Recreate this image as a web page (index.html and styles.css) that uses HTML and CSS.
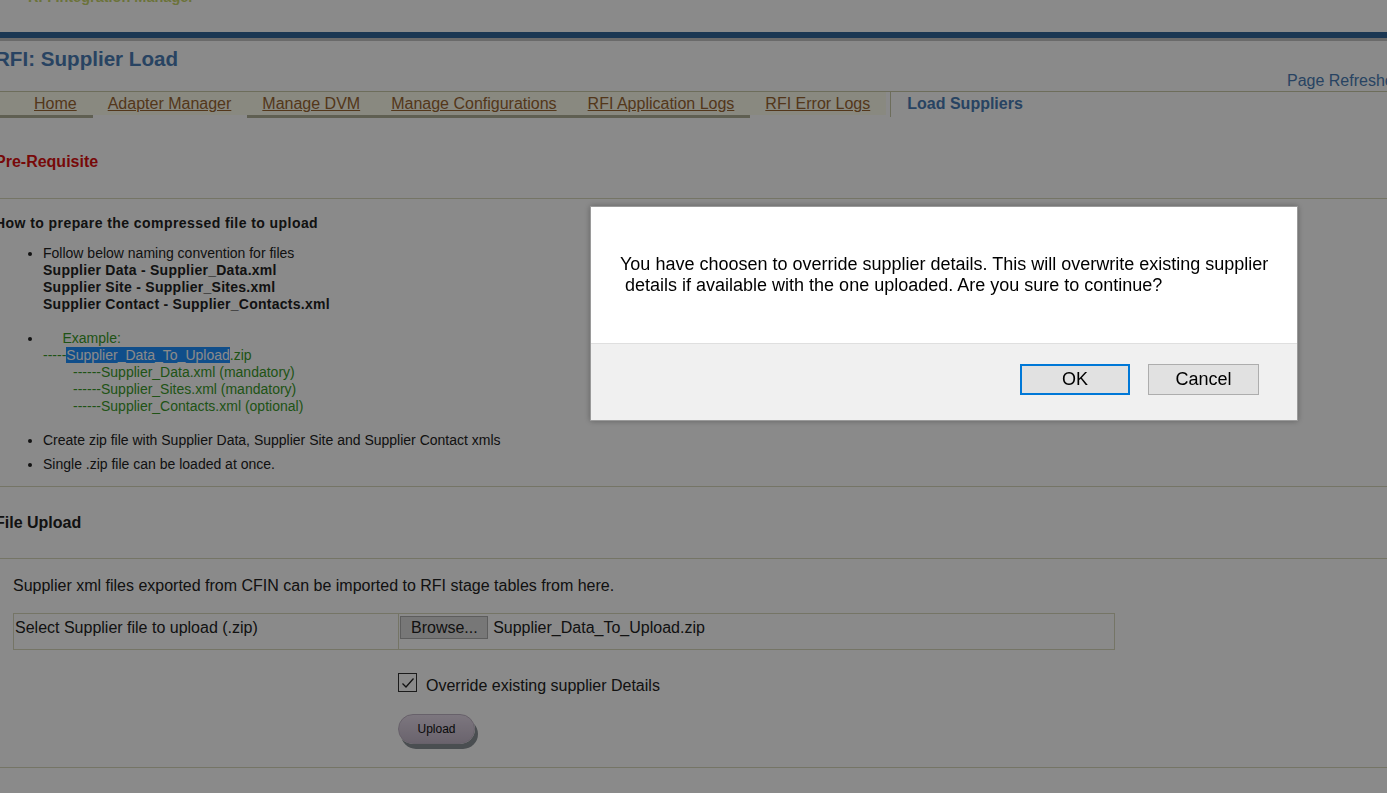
FILE: index.html
```html
<!DOCTYPE html>
<html lang="en">
<head>
    <meta charset="UTF-8">
    <meta name="viewport" content="width=device-width, initial-scale=1.0">
    <title>RFI: Supplier Load</title>
    <link rel="stylesheet" href="styles.css">
</head>
<body>
    <div class="page">
        <div class="brand"><span>RFI Integration Manager</span></div>
        <div class="brand-bar"></div>

        <h1 class="title">RFI: Supplier Load</h1>
        <div class="refresh"><span>Page Refreshed:</span></div>

        <div class="tabs">
            <a class="tab first edged" href="#">Home</a>
            <a class="tab" href="#">Adapter Manager</a>
            <a class="tab edged" href="#">Manage DVM</a>
            <a class="tab edged" href="#">Manage Configurations</a>
            <a class="tab edged" href="#">RFI Application Logs</a>
            <a class="tab" href="#">RFI Error Logs</a>
            <span class="tab active">Load Suppliers</span>
        </div>

        <div class="section-head">
            <h2 class="red">Pre-Requisite</h2>
        </div>

        <div class="prereq">
            <h3>How to prepare the compressed file to upload</h3>
            <ul>
                <li>Follow below naming convention for files<br>
                    <b>Supplier Data - Supplier_Data.xml</b><br>
                    <b>Supplier Site - Supplier_Sites.xml</b><br>
                    <b>Supplier Contact - Supplier_Contacts.xml</b><br>
                    <br>
                </li>
                <li class="green">&nbsp;&nbsp;&nbsp;&nbsp;&nbsp;Example:<br>
                    -----<span class="selected">Supplier_Data_To_Upload</span>.zip<br>
                    <span class="indent">------Supplier_Data.xml (mandatory)</span><br>
                    <span class="indent">------Supplier_Sites.xml (mandatory)</span><br>
                    <span class="indent">------Supplier_Contacts.xml (optional)</span><br>
                    <br>
                </li>
                <li>Create zip file with Supplier Data, Supplier Site and Supplier Contact xmls</li>
                <li class="gap">Single .zip file can be loaded at once.</li>
            </ul>
        </div>

        <div class="section-head upload-head">
            <h2>File Upload</h2>
        </div>

        <div class="upload">
            <p>Supplier xml files exported from CFIN can be imported to RFI stage tables from here.</p>
            <table class="file-table">
                <tr>
                    <td class="label-cell">Select Supplier file to upload (.zip)</td>
                    <td class="file-cell">
                        <span class="browse">Browse...</span>
                        <span class="file-name">Supplier_Data_To_Upload.zip</span>
                    </td>
                </tr>
            </table>
            <div class="check-row">
                <span class="check">
                    <svg width="14" height="12" viewBox="0 0 14 12"><path d="M1.5 6.5 L5 10 L12.5 1.5" fill="none" stroke="#222" stroke-width="1.3"/></svg>
                </span>
                <span>Override existing supplier Details</span>
            </div>
            <button class="upload-btn">Upload</button>
        </div>
    </div>

    <div class="overlay"></div>

    <div class="dialog">
        <div class="dialog-body">
            You have choosen to override supplier details. This will overwrite existing supplier<br>
            &nbsp;details if available with the one uploaded. Are you sure to continue?
        </div>
        <div class="dialog-foot">
            <button class="dlg-btn ok">OK</button>
            <button class="dlg-btn">Cancel</button>
        </div>
    </div>
</body>
</html>
```

FILE: styles.css
```css
body {
    margin: 0;
    font-family: "Liberation Sans", Arial, sans-serif;
    background: #ffffff;
    color: #222222;
    overflow: hidden;
}
.page {
    margin-left: -5px;
    width: 1500px;
}
.brand {
    display: flow-root;
    height: 32px;
}
.brand span {
    display: block;
    margin-top: -11px;
    padding-left: 33px;
    font-size: 14.5px;
    font-weight: bold;
    line-height: 17px;
    color: #c8d56c;
}
.brand-bar {
    height: 6px;
    background-color: #336699;
    border-bottom: 3px solid #c4c4c4;
}
.title {
    margin: 6px 0 0 0;
    font-size: 20.6px;
    line-height: 24px;
    color: #4a7db5;
}
.refresh {
    height: 20px;
    line-height: 20px;
    font-size: 16px;
    color: #4a7db5;
    white-space: nowrap;
}
.refresh span {
    margin-left: 1292px;
}
.tabs {
    display: flex;
    border-top: 1px solid #c9c9a9;
    height: 26px;
}
.tab {
    display: block;
    height: 20px;
    padding: 3px 16px 0 15px;
    line-height: 18px;
    font-size: 16px;
    color: #996633;
    background-color: #fefeed;
    border-bottom: 3px solid transparent;
    background-clip: padding-box;
}
.tab.first {
    padding-left: 39px;
}
.tab.edged {
    border-bottom-color: #b0b098;
}
.tab.active {
    margin-left: 4px;
    padding-left: 16px;
    font-weight: bold;
    color: #4a7db5;
    background: #ffffff;
    border-left: 1px solid #c9c9a9;
    border-bottom: none;
    height: 22px;
}
.section-head {
    padding: 35px 0 27px 0;
    border-bottom: 1px solid #d8d8bd;
}
.section-head h2 {
    margin: 0;
    font-size: 16px;
    line-height: 18px;
    color: #222222;
}
.section-head .red {
    color: #dd1111;
}
.prereq {
    padding: 16px 0 13px 0;
    border-bottom: 1px solid #d8d8bd;
}
.prereq h3 {
    margin: 0 0 14px 0;
    font-size: 14px;
    line-height: 16px;
    letter-spacing: 0.43px;
}
.prereq ul {
    margin: 0;
    padding-left: 48px;
    font-size: 14px;
    line-height: 17px;
}
.prereq b {
    letter-spacing: 0.27px;
}
.prereq .gap {
    margin-top: 7px;
}
.green {
    color: #3a9a2a;
}
.green::marker {
    color: #222222;
}
.selected {
    background-color: #1e90ff;
    color: #ffffff;
}
.indent {
    padding-left: 30px;
}
.upload-head {
    padding-top: 27px;
    padding-bottom: 26px;
}
.upload {
    padding: 18px 0 23px 18px;
    border-bottom: 1px solid #d8d8bd;
    font-size: 16px;
}
.upload p {
    margin: 0 0 18px 0;
    line-height: 18px;
}
.file-table {
    width: 1102px;
    border-collapse: collapse;
    border: 1px solid #d8d8bd;
}
.file-table tr {
    height: 36px;
}
.file-table td {
    padding: 0;
    vertical-align: top;
}
.label-cell {
    width: 383px;
    padding: 5px 0 0 1px !important;
    line-height: 18px;
    border-right: 1px solid #d8d8bd;
}
.file-cell {
    padding: 2px 0 0 1px !important;
}
.browse {
    display: inline-block;
    height: 21px;
    line-height: 21px;
    padding: 0 9px 0 10px;
    background: #dddddd;
    border: 1px solid #adadad;
}
.file-name {
    margin-left: 1px;
}
.check-row {
    display: flex;
    align-items: center;
    gap: 9px;
    margin: 23px 0 0 385px;
    height: 19px;
}
.check {
    width: 17px;
    height: 17px;
    border: 1px solid #333333;
    display: flex;
    align-items: center;
    justify-content: center;
}
.check-row span:last-child {
    margin-top: 7px;
}
.upload-btn {
    display: block;
    margin: 22px 0 0 385px;
    width: 77px;
    height: 30px;
    border: 1px solid #bfb3c4;
    border-radius: 15px;
    background: linear-gradient(#e6dbea, #c4b8ca);
    box-shadow: 3px 5px 0 #8a9096;
    font-family: "Liberation Sans", Arial, sans-serif;
    font-size: 12px;
    color: #111111;
    padding: 0;
}
.overlay {
    position: fixed;
    top: 0;
    left: 0;
    right: 0;
    bottom: 0;
    background: rgba(0, 0, 0, 0.46);
}
.dialog {
    position: fixed;
    left: 590px;
    top: 206px;
    width: 706px;
    background: #ffffff;
    border: 1px solid #9a9a9a;
    box-shadow: 0 0 6px rgba(0, 0, 0, 0.3);
}
.dialog-body {
    padding: 47px 29px 47px 29px;
    font-size: 18px;
    line-height: 21px;
    color: #000000;
    height: 42px;
    white-space: nowrap;
}
.dialog-foot {
    background: #f0f0f0;
    border-top: 1px solid #dfdfdf;
    height: 77px;
    display: flex;
    justify-content: flex-end;
    gap: 18px;
    padding: 20px 38px 0 0;
    box-sizing: border-box;
}
.dlg-btn {
    width: 111px;
    height: 31px;
    background: #e1e1e1;
    border: 1px solid #adadad;
    font-family: "Liberation Sans", Arial, sans-serif;
    font-size: 18px;
    color: #000000;
}
.dlg-btn.ok {
    width: 110px;
    border: 2px solid #0078d7;
}
```
